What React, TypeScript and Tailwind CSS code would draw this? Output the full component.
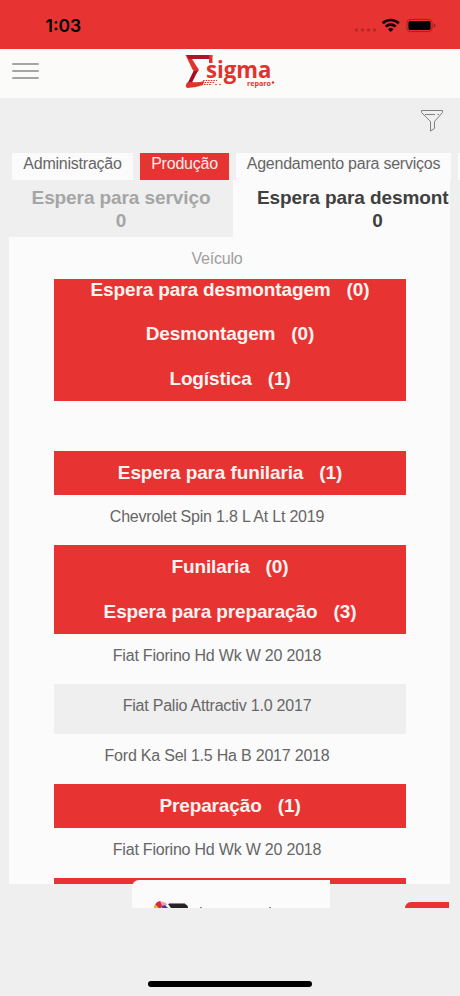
type Row = { kind: 'group'; label: string; count: number } | { kind: 'vehicle'; label: string; shaded?: boolean };

const rows: Row[] = [
  { kind: 'group', label: 'Espera para desmontagem', count: 0 },
  { kind: 'group', label: 'Desmontagem', count: 0 },
  { kind: 'group', label: 'Logística', count: 1 },
  { kind: 'vehicle', label: '' },
  { kind: 'group', label: 'Espera para funilaria', count: 1 },
  { kind: 'vehicle', label: 'Chevrolet Spin 1.8 L At Lt 2019' },
  { kind: 'group', label: 'Funilaria', count: 0 },
  { kind: 'group', label: 'Espera para preparação', count: 3 },
  { kind: 'vehicle', label: 'Fiat Fiorino Hd Wk W 20 2018' },
  { kind: 'vehicle', label: 'Fiat Palio Attractiv 1.0 2017', shaded: true },
  { kind: 'vehicle', label: 'Ford Ka Sel 1.5 Ha B 2017 2018' },
  { kind: 'group', label: 'Preparação', count: 1 },
  { kind: 'vehicle', label: 'Fiat Fiorino Hd Wk W 20 2018' }
];

const tabs = [
  { label: 'Administração', size: 'w-[121px]', active: false },
  { label: 'Produção', size: 'w-[89px]', active: true },
  { label: 'Agendamento para serviços', size: 'w-[215px]', active: false },
  { label: '', size: 'w-[40px]', active: false }
];

const StatusBar = () => (
  <div className="flex h-[49px] shrink-0 items-start justify-between bg-[#e73331] pl-[45.5px] pr-[24px] text-black">
    <span className="mt-[14px] font-['Inter'] text-[17.5px] font-semibold leading-[24px]">1:03</span>
    <svg className="mt-[16px]" width="82" height="18" viewBox="354 16 82 18">
      <g fill="#b32826">
        <rect x="355" y="28.5" width="3" height="3" rx="1" />
        <rect x="361" y="28.5" width="3" height="3" rx="1" />
        <rect x="367" y="28.5" width="3" height="3" rx="1" />
        <rect x="373" y="28.5" width="3" height="3" rx="1" />
      </g>
      <g fill="none" stroke="#160303" strokeWidth="2.7">
        <path d="M382.6 23.2a11.8 11.8 0 0 1 16.2 0" />
        <path d="M385.7 26.6a7.2 7.2 0 0 1 10 0" />
      </g>
      <path d="M387.9 29.2a4.2 4.2 0 0 1 5.6 0l-2.8 2.8z" fill="#160303" />
      <rect x="406.9" y="19.4" width="25.2" height="12.2" rx="3.6" fill="none" stroke="#9c2322" />
      <rect x="408.4" y="20.9" width="22.2" height="9.2" rx="2.2" fill="#000" />
      <path d="M433.6 23.4q1.9.6 1.9 2.1t-1.9 2.1z" fill="#9c2322" />
    </svg>
  </div>
);

const Logo = () => (
  <svg width="92" height="38" viewBox="184 52 92 38">
    <path d="M185.5 55h4l9.500 15-3 3.500-3.500-4z" fill="#e0332f" />
    <path d="M186.500 55h23v4h-20.500z" fill="#b01226" />
    <path d="M209 55h3.500v8h-3.500z" fill="#e0332f" />
    <path d="M193.500 71l4.500-.5-6 12-4.500 1z" fill="#a50d20" />
    <path d="M187 82.500l5-.5q7 .8 12-1l-1 4q-8 3-15.500 3-3-1-.5-5.500z" fill="#e0332f" />
    <path d="M203 80.500h14M202 82.500h13M204 84.500h8" stroke="#e0332f" strokeWidth="1.1" strokeDasharray="1.6 1" />
    <circle cx="216" cy="84.500" r=".8" fill="#e0332f" />
    <circle cx="220" cy="84.500" r=".8" fill="#e0332f" />
    <text x="206" y="77.500" textLength="65.5" lengthAdjust="spacingAndGlyphs" fill="#e0332f" className="font-['Open_Sans'] text-[22.5px] font-bold">
      sigma
    </text>
    <text x="247" y="86" textLength="24" lengthAdjust="spacingAndGlyphs" fill="#e0332f" className="font-['Open_Sans'] text-[7.5px] font-bold">
      reparo
    </text>
    <circle cx="273" cy="82.500" r="1.2" fill="#e0332f" />
  </svg>
);

const Header = () => (
  <header className="grid h-[49px] shrink-0 grid-cols-[1fr_92px_1fr] items-start bg-[#fbfbfa]">
    <div className="ml-[12px] mt-[14px] flex w-[27px] flex-col gap-[5px]">
      <span className="h-[2px] rounded-full bg-[#a5a5a5]" />
      <span className="h-[2px] rounded-full bg-[#a5a5a5]" />
      <span className="h-[2px] rounded-full bg-[#a5a5a5]" />
    </div>
    <div className="mt-[3px]">
      <Logo />
    </div>
  </header>
);

const Toolbar = () => (
  <div className="flex h-[55px] shrink-0 justify-end pr-[16px] pt-[11px]">
    <svg width="24" height="24" viewBox="0 0 24 24" fill="none" stroke="#808080" strokeWidth="1" strokeLinejoin="round">
      <path d="M1.5 1.5h21v2l-8 9v7l-4 2.500v-9.500l-9-9z" />
      <path d="M5 5.500h10M17.500 5.500h1.500" />
    </svg>
  </div>
);

const Tabs = () => (
  <nav className="flex h-[27px] shrink-0 gap-[7px] overflow-hidden pl-[12px]">
    {tabs.map((tab, i) => (
      <div
        key={i}
        className={`flex h-[27px] shrink-0 justify-center whitespace-nowrap text-[16px] leading-[21px] tracking-[-0.23px] ${tab.size} ${
          tab.active ? 'bg-[#e73331] text-[#fdeceb]' : 'bg-[#fbfbfb] text-[#666]'
        }`}
      >
        {tab.label}
      </div>
    ))}
  </nav>
);

const Columns = () => (
  <div className="ml-[9px] flex h-[57px] w-[441px] shrink-0 overflow-hidden text-center text-[19px] font-bold leading-[23px] tracking-[-0.09px]">
    <div className="w-[224px] shrink-0 bg-[#efefef] pt-[6px] text-[#a5a5a5]">
      <p>Espera para serviço</p>
      <p>0</p>
    </div>
    <div className="w-[289px] shrink-0 whitespace-nowrap bg-[#fbfbfb] pt-[6px] text-[#404040]">
      <p className="w-[216px] overflow-hidden pl-[24px] text-left">Espera para desmontagem</p>
      <p>0</p>
    </div>
  </div>
);

const RowView = ({ row }: { row: Row }) =>
  row.kind === 'group' ? (
    <div className="flex h-[44.5px] shrink-0 items-center justify-center gap-[16px] bg-[#e73331] text-[19px] font-bold tracking-[-0.12px] text-[#fdf3f1]">
      <span>{row.label}</span>
      <span>({row.count})</span>
    </div>
  ) : (
    <div
      className={`flex h-[49.9px] shrink-0 justify-center pr-[26px] pt-[12px] text-[16px] leading-[20px] tracking-[-0.21px] text-[#666] ${
        row.shaded ? 'bg-[#efefef]' : ''
      }`}
    >
      {row.label}
    </div>
  );

const Board = () => (
  <main className="ml-[9px] flex h-[647px] w-[441px] shrink-0 flex-col bg-[#fbfbfb] pl-[45px] pr-[44px]">
    <div className="h-[42px] shrink-0 pr-[26px] pt-[12px] text-center text-[16px] leading-[20px] tracking-[-0.21px] text-[#a0a0a0]">
      Veículo
    </div>
    <div className="flex min-h-0 flex-1 flex-col justify-start overflow-hidden">
      <div className="-mt-[11.5px] flex flex-col">
        {rows.map((row, i) => (
          <RowView key={i} row={row} />
        ))}
        <div className="h-[44.5px] bg-[#e73331]" />
      </div>
    </div>
  </main>
);

const BottomOverlay = () => (
  <div className="absolute left-[132px] top-[880px] flex h-[28px] w-[317px] items-end justify-between overflow-hidden">
    <div className="flex h-[28px] w-[198px] items-end rounded-tl-[7px] bg-[#fbfbfb] pl-[22px]">
      <svg width="120" height="8" viewBox="154 900 120 8">
        <path d="M154 908q1-6 6-7l4 3-3 4z" fill="#d52b42" />
        <path d="M154 908l1-4 4 4z" fill="#f2b42c" />
        <path d="M160 901l6 2 1 2-5 1z" fill="#ef9aaf" />
        <path d="M162 906l3-1 3 3h-6z" fill="#493a9b" />
        <path d="M168 904h17q3 1 3 4h-17z" fill="#252326" />
        <path d="M169 903.500h16" stroke="#b6426f" strokeWidth=".8" />
        <path d="M200 907.500h2M269 907.500h2" stroke="#888" />
      </svg>
    </div>
    <div className="h-[6px] w-[44px] rounded-tl-[7px] bg-[#e73331]" />
  </div>
);

export default function App() {
  return (
    <div className="relative flex h-[996px] w-[460px] flex-col overflow-hidden bg-[#efefef] font-['Liberation_Sans',sans-serif]">
      <StatusBar />
      <Header />
      <Toolbar />
      <Tabs />
      <Columns />
      <Board />
      <BottomOverlay />
      <div className="mt-auto mb-[9px] h-[6px] w-[164px] self-center rounded-full bg-black" />
    </div>
  );
}
